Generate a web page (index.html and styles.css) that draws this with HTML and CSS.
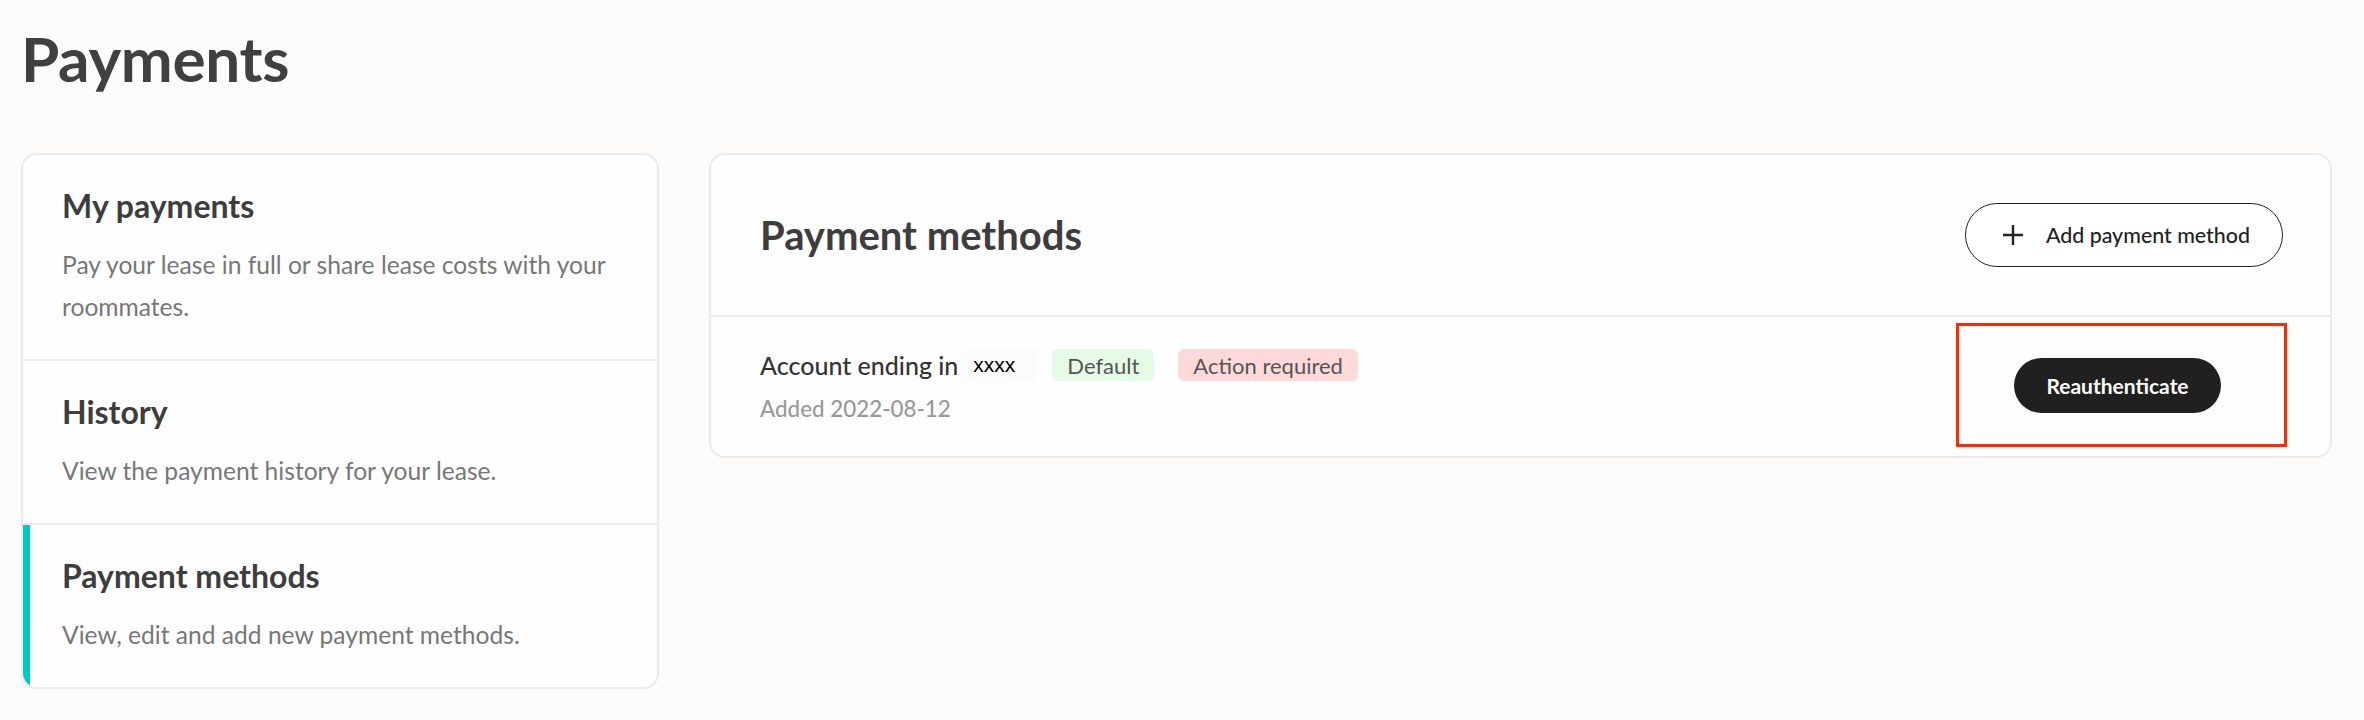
FILE: index.html
```html
<!DOCTYPE html>
<html lang="en">
<head>
<meta charset="utf-8">
<title>Payments</title>
<link rel="stylesheet" href="styles.css">
</head>
<body>
<div class="page">
  <h1 class="page-title">Payments</h1>
  <div class="layout">
    <nav class="side-nav">
      <div class="nav-item">
        <div class="nav-title">My payments</div>
        <div class="nav-desc">Pay your lease in full or share lease costs with your roommates.</div>
      </div>
      <div class="nav-item">
        <div class="nav-title">History</div>
        <div class="nav-desc">View the payment history for your lease.</div>
      </div>
      <div class="nav-item active">
        <div class="nav-title">Payment methods</div>
        <div class="nav-desc">View, edit and add new payment methods.</div>
      </div>
    </nav>
    <section class="card">
      <header class="card-header">
        <h2 class="card-title">Payment methods</h2>
        <button class="btn-outline">
          <svg class="plus" width="22" height="22" viewBox="0 0 22 22" aria-hidden="true">
            <path d="M11 1v20M1 11h20" stroke="#222" stroke-width="2.4" fill="none"/>
          </svg>
          <span>Add payment method</span>
        </button>
      </header>
      <div class="method-row">
        <div class="method-info">
          <div class="method-line">
            <span class="method-name">Account ending in</span>
            <span class="mask">xxxx</span>
            <span class="badge badge-green">Default</span>
            <span class="badge badge-red">Action required</span>
          </div>
          <div class="method-date">Added 2022-08-12</div>
        </div>
        <div class="highlight">
          <button class="btn-dark">Reauthenticate</button>
        </div>
      </div>
    </section>
  </div>
</div>
</body>
</html>
```

FILE: styles.css
```css
* { box-sizing: border-box; }
html, body { margin: 0; padding: 0; }
body {
  background: #fdfcfb;
  font-family: Lato, "Noto Sans", sans-serif;
  color: #3d3d3d;
}
.page {
  padding: 0 32px 0 21px;
}
.page-title {
  margin: 0;
  padding-top: 22px;
  height: 153px;
  font-size: 62px;
  line-height: 72px;
  font-weight: 700;
  color: #404040;
  letter-spacing: -0.3px;
}
.layout {
  display: flex;
  gap: 50px;
  align-items: flex-start;
}
.side-nav {
  width: 638px;
  flex: none;
  background: #fefefe;
  border: 2px solid #ebebeb;
  border-radius: 16px;
  overflow: hidden;
}
.nav-item {
  padding: 33px 30px 31px 39px;
  border-top: 2px solid #ebebeb;
}
.nav-item:first-child { border-top: none; }
.nav-item.active { box-shadow: inset 7px 0 0 #00c9c9; }
.nav-title {
  font-size: 32px;
  line-height: 36px;
  font-weight: 700;
  color: #3d3d3d;
}
.nav-desc {
  margin-top: 20px;
  font-size: 24.6px;
  line-height: 42px;
  color: #777;
}
.card {
  flex: 1;
  background: #fefefe;
  border: 2px solid #ebebeb;
  border-radius: 16px;
}
.card-header {
  display: flex;
  align-items: center;
  justify-content: space-between;
  min-height: 162px;
  padding: 0 47px 0 49px;
  border-bottom: 2px solid #ebebeb;
}
.card-title {
  margin: 0;
  font-size: 40px;
  font-weight: 700;
  color: #3d3d3d;
}
.btn-outline {
  display: flex;
  align-items: center;
  gap: 22px;
  height: 64px;
  padding: 0 32px 0 36px;
  border: 1.5px solid #222;
  border-radius: 32px;
  background: #fff;
  font-family: inherit;
  font-size: 21.4px;
  font-weight: 500;
  color: #222;
}
.plus { display: block; }
.method-row {
  display: flex;
  align-items: center;
  justify-content: space-between;
  padding: 6px 43px 9px 49px;
}
.method-info { padding-top: 2px; }
.method-line {
  display: flex;
  align-items: center;
  height: 32px;
}
.method-name {
  font-size: 25px;
  font-weight: 500;
  color: #333;
}
.mask {
  margin-left: 3px;
  padding: 4px 22px 4px 12px;
  background: #fbfbfa;
  font-family: "Liberation Sans", Arial, sans-serif;
  font-size: 21px;
  color: #000;
}
.badge {
  height: 32px;
  display: inline-flex;
  align-items: center;
  padding: 0 15px;
  border-radius: 6px;
  font-size: 22px;
  color: #555;
}
.badge-green { margin-left: 15px; background: #e5fbe5; }
.badge-red { margin-left: 24px; background: #fdd9da; }
.method-date {
  margin-top: 14px;
  font-size: 22.4px;
  line-height: 28px;
  font-weight: 500;
  color: #999;
}
.highlight {
  width: 331px;
  height: 124px;
  border: 3px solid #ff2a00;
  display: flex;
  align-items: center;
  justify-content: center;
  padding-right: 8px;
}
.btn-dark {
  height: 55px;
  padding: 0 32px;
  border: none;
  border-radius: 28px;
  background: #202020;
  color: #fff;
  font-family: inherit;
  font-size: 21px;
  font-weight: 700;
}
```
